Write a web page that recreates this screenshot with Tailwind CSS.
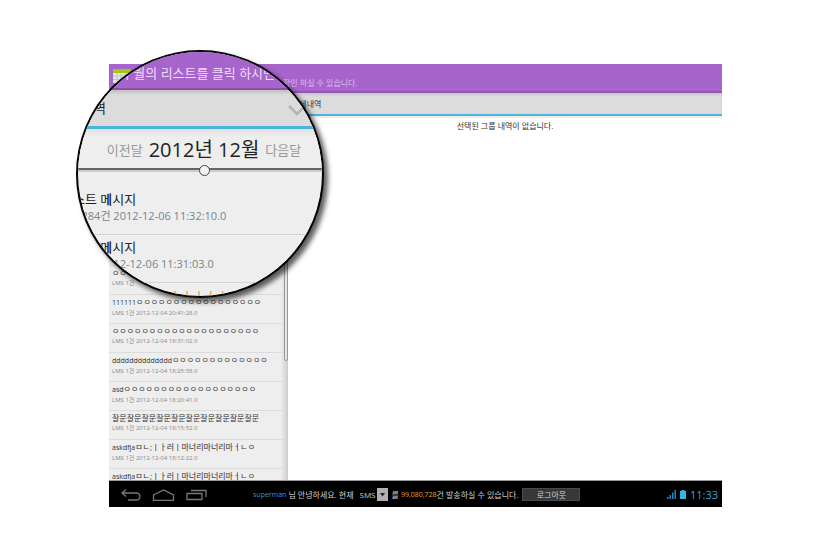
<!DOCTYPE html>
<html lang="ko">
<head>
<meta charset="utf-8">
<title>발송 내역</title>
<script src="https://cdn.jsdelivr.net/npm/@tailwindcss/browser@4"></script>
</head>
<body class="bg-white font-['Open_Sans','Noto_Sans_CJK_KR',sans-serif] text-[8px] text-[#333]">
<div class="relative min-h-screen overflow-hidden pt-16 pr-[98px] pl-[109px]">

  <div class="flex h-[443px] flex-col bg-white">
    <header class="flex h-[29px] items-end border-b-2 border-[#9355b3] bg-[#a864cd] pl-1 text-[#dcbcec]">
      <svg class="mb-2 h-[14px] w-[18px] self-end" viewBox="0 0 18 14" aria-hidden="true"><rect y="0" width="18" height="4" fill="#a5c814"/><rect y="4" width="18" height="10" fill="#e4e4e0"/><path d="M0 7h18M0 10.500h18M4 4v10M8 4v10M12 4v10" stroke="#c4c4c0"/></svg>
      <p class="ml-[152px] leading-4">확인 하실 수 있습니다.</p>
    </header>
    <div class="flex h-[23px] items-center border-b-2 border-[#4db2dc] bg-[#dcdcdc] pl-[183px] shadow-[inset_0_2px_2px_#00000018]">
      <h1 class="leading-4">상세내역</h1>
    </div>
    <div class="flex min-h-0 flex-1">
      <aside class="relative w-[179px] overflow-hidden bg-linear-to-r from-[#eee] from-96% to-[#ccc] pt-[149px]">
        <ul class="mr-1">
          <li class="h-[29px] border-t border-[#dcdcdc] pt-[2px] pl-[3px]"><p class="leading-[10px]">ㅇㅇ</p><p class="text-[6px] leading-[10px] text-[#888]">LMS 1건</p></li>
          <li class="h-[29px] border-t border-[#dcdcdc] pt-[2px] pl-[3px]"><p class="leading-[10px]"><span class="text-[7px]">111111</span>ㅇㅇㅇㅇㅇㅇㅇㅇㅇㅇㅇㅇㅇㅇㅇㅇㅇ</p><p class="text-[6px] leading-[10px] text-[#888]">LMS 1건 2012-12-04 20:41:28.0</p></li>
          <li class="h-[29px] border-t border-[#dcdcdc] pt-[2px] pl-[3px]"><p class="leading-[10px]">ㅇㅇㅇㅇㅇㅇㅇㅇㅇㅇㅇㅇㅇㅇㅇㅇㅇㅇㅇㅇ</p><p class="text-[6px] leading-[10px] text-[#888]">LMS 1건 2012-12-04 18:31:02.0</p></li>
          <li class="h-[29px] border-t border-[#dcdcdc] pt-[2px] pl-[3px]"><p class="leading-[10px]"><span class="text-[7px]">dddddddddddddd</span>ㅇㅇㅇㅇㅇㅇㅇㅇㅇㅇㅇㅇㅇ</p><p class="text-[6px] leading-[10px] text-[#888]">LMS 1건 2012-12-04 18:25:58.0</p></li>
          <li class="h-[29px] border-t border-[#dcdcdc] pt-[2px] pl-[3px]"><p class="leading-[10px]"><span class="text-[7px]">asd</span>ㅇㅇㅇㅇㅇㅇㅇㅇㅇㅇㅇㅇㅇㅇㅇㅇㅇㅇ</p><p class="text-[6px] leading-[10px] text-[#888]">LMS 1건 2012-12-04 18:20:41.0</p></li>
          <li class="h-[29px] border-t border-[#dcdcdc] pt-[2px] pl-[3px]"><p class="leading-[10px]">잘문잘문잘문잘문잘문잘문잘문잘문잘문잘문</p><p class="text-[6px] leading-[10px] text-[#888]">LMS 1건 2012-12-04 18:15:52.0</p></li>
          <li class="h-[29px] border-t border-[#dcdcdc] pt-[2px] pl-[3px]"><p class="leading-[10px]"><span class="text-[7px]">askdfja</span>ㅁㄴ;ㅣㅏ러ㅣ마너리마너리마ㅓㄴㅇ</p><p class="text-[6px] leading-[10px] text-[#888]">LMS 1건 2012-12-04 18:12:22.0</p></li>
          <li class="h-[29px] border-t border-[#dcdcdc] pt-[2px] pl-[3px]"><p class="leading-[10px]"><span class="text-[7px]">askdfja</span>ㅁㄴ;ㅣㅏ러ㅣ마너리마너리마ㅓㄴㅇ</p></li>
        </ul>
        <div class="absolute top-6 right-0 h-[221px] w-[4px] rounded-sm border border-[#999] bg-[#e4e4e4]"></div>
      </aside>
      <main class="flex-1 text-center shadow-[inset_0_2px_1px_#00000014]"><p class="pt-[2px] leading-4">선택된 그룹 내역이 없습니다.</p></main>
    </div>
    <footer class="flex h-[27px] items-center border-t border-[#999] bg-black px-3 pt-px text-[#d0d0d0]">
      <nav class="flex w-[132px] gap-[11px]">
        <button aria-label="뒤로"><svg class="h-3 w-5" viewBox="0 0 20 12" fill="none" stroke="#777" stroke-width="1.300"><path d="M5 .5 1 4l4 3.500M1 4h14.500a3.500 3.500 0 0 1 0 7H7"/></svg></button>
        <button aria-label="홈"><svg class="h-3 w-[23px]" viewBox="0 0 23 12" fill="none" stroke="#777" stroke-width="1.300"><path d="M1.500 6 11.500 1l10 5v5.300h-20z"/></svg></button>
        <button aria-label="최근 앱"><svg class="h-3 w-[21px]" viewBox="0 0 21 12" fill="none" stroke="#777" stroke-width="1.300"><path d="M1 4.500h15v6H1zM5 1.500h15V8"/></svg></button>
      </nav>
      <div class="flex items-center leading-4 whitespace-nowrap">
        <span class="mr-[2px] text-[7px] text-[#2d9bd2]">superman</span>
        <span>님 안녕하세요. 현재</span>
        <div class="relative ml-[6px] h-[13px]">
          <select aria-label="메시지 종류" class="block h-[13px] w-[28px] appearance-none border-0 bg-transparent p-0 text-[8px] leading-[13px]"><option>SMS</option></select>
          <span class="pointer-events-none absolute top-0 right-0 flex h-[13px] w-[11px] items-center justify-center bg-[#b0b0b0]"><svg class="h-1 w-[5px]" viewBox="0 0 5 4"><path d="M0 0h5L2.500 3.500z" fill="#222"/></svg></span>
        </div>
        <span class="ml-1">를</span>
        <span class="ml-[2px] text-[7px] text-[#e0a434]">99,080,728</span>
        <span>건 발송하실 수 있습니다.</span>
        <button class="ml-1 h-[13px] w-[58px] border border-[#4a4a4a] bg-[#383838] leading-[11px]">로그아웃</button>
      </div>
      <div class="-mr-3 ml-auto flex items-center gap-1 text-[#33a5d8]">
        <svg class="h-[9px] w-[9px]" viewBox="0 0 9 9" fill="#2a86b4" aria-hidden="true"><path d="M0 7h1.500v2H0zM2.500 5H4v4H2.500zM5 2.500h1.500V9H5zM7.500 0H9v9H7.500z"/></svg>
        <svg class="h-[9px] w-[6px]" viewBox="0 0 6 9" fill="#33b5e5" aria-hidden="true"><path d="M1.500 0h3v1H6v8H0V1h1.500z"/></svg>
        <time class="pr-1 text-[11px] leading-4">11:33</time>
      </div>
    </footer>
  </div>

  <section class="absolute top-[50px] left-[76px] h-[248px] w-[248px] rounded-full bg-black p-px shadow-[4px_4px_5px_#000000a0]">
    <div class="h-full overflow-hidden rounded-full border border-black bg-[#eee] whitespace-nowrap">
      <div class="h-[38px] border-b-2 border-[#8d50a8] bg-[#a864cd] pt-[11px] pl-10 text-[13px] leading-5 text-[#f0dcf8]">각 월의 리스트를 클릭 하시면</div>
      <div class="flex h-[39px] items-center justify-between border-b-3 border-[#4db2dc] bg-[#dcdcdc] pr-4 pl-1 text-[13px] leading-5 text-[#222] shadow-[inset_0_3px_3px_#0000001c]">
        <h2>내역</h2>
        <svg class="mt-1 h-[11px] w-[18px]" viewBox="0 0 18 11" fill="none" stroke="#b4b4b4" stroke-width="2.500" aria-hidden="true"><path d="M1 1l8 8 8-8"/></svg>
      </div>
      <div class="relative flex h-[43px] items-center justify-center gap-[6px] border-b-2 border-[#ccc] bg-linear-to-b from-[#e2e2e2] to-[#eee] to-20% pl-2 text-[13px] text-[#999] shadow-[inset_0_-2px_0_#666]">
        <button class="leading-5">이전달</button>
        <strong class="text-[20px] leading-8 font-normal text-[#222]">2012년 12월</strong>
        <button class="leading-5">다음달</button>
        <span class="absolute -bottom-[6px] left-[121px] h-[11px] w-[11px] rounded-full border border-[#444] bg-[#f4f4f4]"></span>
      </div>
      <ul class="-ml-[17px] pt-[14px]">
        <li class="h-12 pt-[5px]"><p class="text-[13px] leading-4 text-[#222]">테스트 <span class="bg-[linear-gradient(90deg,transparent_60%,#78ace0_60%,#78ace0_95%,transparent_95%)] bg-[length:100%_11px] bg-center bg-no-repeat">메</span>시지</p><p class="-ml-1 pt-px text-[11px] leading-4 text-[#788490]">LMS 284건 2012-12-06 11:32:10.0</p></li>
        <li class="h-12 border-t border-[#d4d4d4] pt-1"><p class="text-[13px] leading-4 text-[#222]">테스트 <span class="bg-[linear-gradient(90deg,transparent_60%,#78ace0_60%,#78ace0_95%,transparent_95%)] bg-[length:100%_11px] bg-center bg-no-repeat">메</span>시지</p><p class="-ml-1 pt-px text-[11px] leading-4 text-[#788490]">LMS 1건 2012-12-06 11:31:03.0</p></li>
        <li class="h-12 border-t border-[#d4d4d4] pt-[5px] pl-24"><p class="text-[13px] leading-4 text-[#dc9636]">ㅣㅣㅣㅣㅣㅣ</p></li>
      </ul>
    </div>
  </section>

</div>
</body>
</html>
